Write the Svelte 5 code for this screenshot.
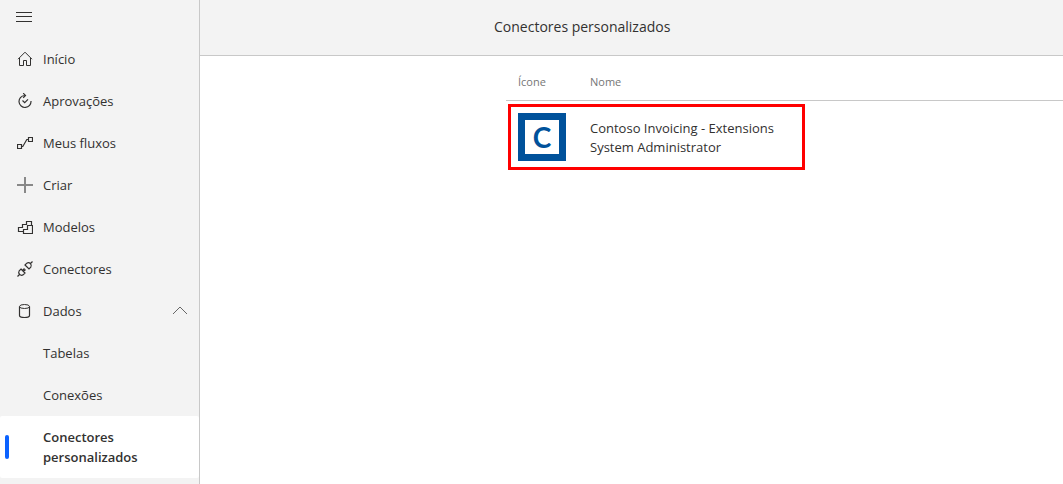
<script lang="ts">
    interface NavItem {
        label: string
        icon?: string
        active?: boolean
        expanded?: boolean
    }

    const navItems: NavItem[] = [
        { label: 'Início', icon: 'home' },
        { label: 'Aprovações', icon: 'approvals' },
        { label: 'Meus fluxos', icon: 'flows' },
        { label: 'Criar', icon: 'plus' },
        { label: 'Modelos', icon: 'templates' },
        { label: 'Conectores', icon: 'plug' },
        { label: 'Dados', icon: 'database', expanded: true },
        { label: 'Tabelas' },
        { label: 'Conexões' },
        { label: 'Conectores personalizados', active: true }
    ]

    const connectors = [
        { initial: 'C', name: 'Contoso Invoicing - Extensions', owner: 'System Administrator', highlighted: true }
    ]

    let menuOpen = $state(true)
</script>

{#snippet navIcon(name: string)}
    <svg class="icon" viewBox="0 0 16 16" aria-hidden="true">
        {#if name === 'home'}
            <path d="M1 8.2 8 1.2l7 7M2.5 7v7.5h4V9.5h3v5h4V7" />
        {:else if name === 'approvals'}
            <path class="bold" d="M7.5 2.5A6 6 0 1 0 14 8M6.2.2l2.3 2.3-2.3 2.3M5.5 7.5l2.2 2.2L11 6.4" />
        {:else if name === 'flows'}
            <path class="bold" d="M.5 9.5h4v4h-4zM11.5 2.5h4v4h-4zM4.5 11.5h1.3l4-7h1.7" />
        {:else if name === 'plus'}
            <path class="soft" d="M8 0v16M0 8h16" />
        {:else if name === 'templates'}
            <path class="bold" d="M6.5 12.5h-5v-4h4v-3h4v-3h5v4M6.5 14.5v-4h4v-4h5v8z" />
        {:else if name === 'plug'}
            <path class="bold" d="M.5 15.5l2-2M13.5 2.5l2-2M8 4l4 4 1.8-1.8a2.9 2.9 0 0 0-4-4zM4 8l4 4-1.8 1.8a2.9 2.9 0 0 1-4-4zM5.5 9.5l2-2M6.5 10.5l2-2" />
        {:else if name === 'database'}
            <ellipse cx="7.5" cy="3.5" rx="5" ry="2" />
            <path class="bold" d="M2.5 3.5v9c0 1.1 2.2 2 5 2s5-.9 5-2v-9" />
        {/if}
    </svg>
{/snippet}

<div class="app">
    <nav class="sidebar" aria-label="Navegação">
        <button class="menu-toggle" aria-label="Menu" aria-expanded={menuOpen} onclick={() => (menuOpen = !menuOpen)}>
            <svg class="icon" viewBox="0 0 16 16" aria-hidden="true">
                <path d="M0 3.5h16M0 7.5h16M0 12.5h16" />
            </svg>
        </button>
        {#if menuOpen}
            <ul>
                {#each navItems as item}
                    <li>
                        <a class="nav-link" class:active={item.active} href="#top" aria-current={item.active ? 'page' : undefined}>
                            <span class="icon-slot">
                                {#if item.icon}
                                    {@render navIcon(item.icon)}
                                {/if}
                            </span>
                            <span class="label">{item.label}</span>
                            {#if item.expanded}
                                <svg class="icon chevron" viewBox="0 0 16 16" aria-hidden="true">
                                    <path d="m1 11 7-7 7 7" />
                                </svg>
                            {/if}
                        </a>
                    </li>
                {/each}
            </ul>
        {/if}
    </nav>

    <main>
        <header>
            <h1>Conectores personalizados</h1>
        </header>
        <table>
            <thead>
                <tr>
                    <th class="icon-col" scope="col">Ícone</th>
                    <th scope="col">Nome</th>
                </tr>
            </thead>
            <tbody>
                {#each connectors as connector}
                    <tr>
                        <td class="icon-col">
                            {#if connector.highlighted}
                                <div class="highlight"></div>
                            {/if}
                            <div class="logo"><span>{connector.initial}</span></div>
                        </td>
                        <td class="name-col">
                            <div>{connector.name}</div>
                            <div>{connector.owner}</div>
                        </td>
                    </tr>
                {/each}
            </tbody>
        </table>
    </main>
</div>

<style>
    :global(body) {
        background: #fff;
    }

    .app {
        display: flex;
        min-height: 100vh;
        color: #323130;
        font: 13px/20px 'Open Sans', 'Noto Sans', sans-serif;
    }

    .sidebar {
        box-sizing: border-box;
        flex: 0 0 200px;
        background: #f3f3f3;
        border-right: 1px solid #c8c8c8;

        & ul {
            margin: 0;
            padding: 0;
            list-style: none;
        }
    }

    .menu-toggle {
        display: block;
        height: 38px;
        padding: 0 16px 4px;
        border: 0;
        background: none;
        color: inherit;
    }

    .icon {
        display: block;
        width: 16px;
        height: 16px;
        fill: none;
        stroke: currentColor;
        stroke-width: 1;

        & .bold {
            stroke-width: 1.2;
        }

        & .soft {
            stroke: #888;
            stroke-width: 2;
        }
    }

    .nav-link {
        position: relative;
        display: flex;
        align-items: center;
        padding: 11px 11px 11px 17px;
        color: inherit;
        text-decoration: none;

        &.active {
            background: #fff;
            border-radius: 2px;
            font-weight: 600;
        }

        &.active::before {
            content: '';
            position: absolute;
            top: 19px;
            bottom: 19px;
            left: 5px;
            width: 4px;
            border-radius: 2px;
            background: #0b62ff;
        }
    }

    .icon-slot {
        flex: 0 0 26px;
    }

    .label {
        flex: 1;
    }

    .chevron {
        stroke: #666;
    }

    main {
        flex: 1;
        min-width: 0;
    }

    header {
        padding: 17px 16px 18px 294px;
        background: #f3f3f3;
        border-bottom: 1px solid #c8c8c8;
    }

    h1 {
        margin: 0;
        font-size: 14px;
        font-weight: 400;
    }

    table {
        width: calc(100% - 306px);
        margin-left: 306px;
        border-collapse: separate;
        border-spacing: 0;
    }

    th {
        padding: 16px 12px 8px;
        border-bottom: 1px solid #c8c8c8;
        color: #767676;
        font-size: 11px;
        font-weight: 400;
        text-align: left;
    }

    td {
        padding: 12px;
        line-height: 19px;
    }

    .icon-col {
        position: relative;
        width: 48px;
    }

    .name-col {
        padding: 14px 12px 12px;
    }

    .highlight {
        position: absolute;
        top: 3px;
        left: 2px;
        box-sizing: border-box;
        width: 297px;
        height: 66px;
        border: 3px solid #f00;
        pointer-events: none;
    }

    .logo {
        display: flex;
        align-items: center;
        justify-content: center;
        box-sizing: border-box;
        width: 48px;
        height: 48px;
        border: 7px solid #00529b;
        background: #fff;
        color: #00529b;
        font: 700 28px/34px Lato, sans-serif;
    }
</style>
